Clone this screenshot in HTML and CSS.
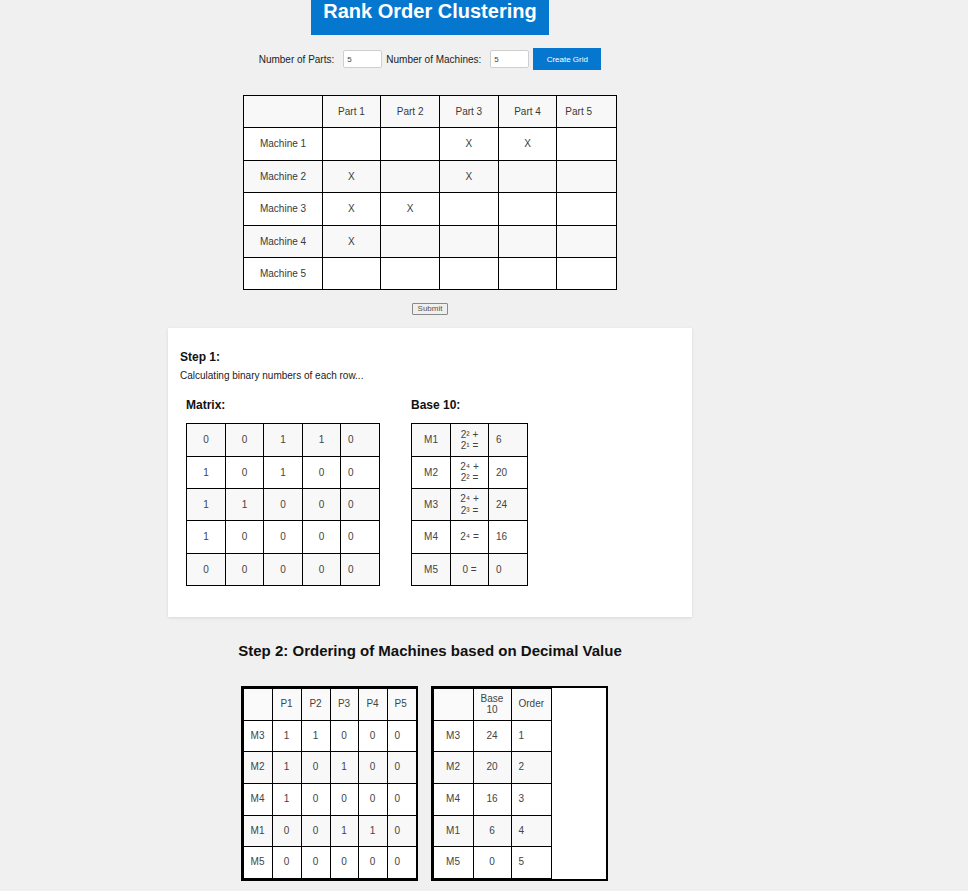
FILE: index.html
```html
<!DOCTYPE html>
<html lang="en">
<head>
<meta charset="utf-8">
<title>Rank Order Clustering</title>
<link rel="stylesheet" href="styles.css">
</head>
<body>
<div class="page">
  <h1 class="title">Rank Order Clustering</h1>

  <div class="controls">
    <label class="lbl">Number of Parts:</label>
    <input class="num" type="text" value="5">
    <label class="lbl">Number of Machines:</label>
    <input class="num" type="text" value="5">
    <button class="create">Create Grid</button>
  </div>

  <table class="grid">
    <thead>
      <tr><th></th><th>Part 1</th><th>Part 2</th><th>Part 3</th><th>Part 4</th><th>Part 5</th></tr>
    </thead>
    <tbody>
      <tr><td>Machine 1</td><td></td><td></td><td>X</td><td>X</td><td></td></tr>
      <tr><td>Machine 2</td><td>X</td><td></td><td>X</td><td></td><td></td></tr>
      <tr><td>Machine 3</td><td>X</td><td>X</td><td></td><td></td><td></td></tr>
      <tr><td>Machine 4</td><td>X</td><td></td><td></td><td></td><td></td></tr>
      <tr><td>Machine 5</td><td></td><td></td><td></td><td></td><td></td></tr>
    </tbody>
  </table>

  <button class="submit">Submit</button>

  <section class="card">
    <h3 class="step-title">Step 1:</h3>
    <p class="step-note">Calculating binary numbers of each row...</p>
    <div class="step-cols">
      <div class="col">
        <h4 class="col-title">Matrix:</h4>
        <table class="mini matrix">
          <colgroup><col class="c39"><col class="c38"><col class="c39"><col class="c38"><col class="c39"></colgroup>
          <tbody>
            <tr><td>0</td><td>0</td><td>1</td><td>1</td><td>0</td></tr>
            <tr><td>1</td><td>0</td><td>1</td><td>0</td><td>0</td></tr>
            <tr><td>1</td><td>1</td><td>0</td><td>0</td><td>0</td></tr>
            <tr><td>1</td><td>0</td><td>0</td><td>0</td><td>0</td></tr>
            <tr><td>0</td><td>0</td><td>0</td><td>0</td><td>0</td></tr>
          </tbody>
        </table>
      </div>
      <div class="col">
        <h4 class="col-title">Base 10:</h4>
        <table class="mini base">
          <colgroup><col class="c39"><col class="c38"><col class="c39"></colgroup>
          <tbody>
            <tr><td>M1</td><td class="f">2² + 2¹ =</td><td>6</td></tr>
            <tr><td>M2</td><td class="f">2⁴ + 2² =</td><td>20</td></tr>
            <tr><td>M3</td><td class="f">2⁴ + 2³ =</td><td>24</td></tr>
            <tr><td>M4</td><td class="f">2⁴ =</td><td>16</td></tr>
            <tr><td>M5</td><td class="f">0 =</td><td>0</td></tr>
          </tbody>
        </table>
      </div>
    </div>
  </section>

  <h2 class="step2-title">Step 2: Ordering of Machines based on Decimal Value</h2>

  <div class="step2">
    <div class="box">
      <table class="mini order">
        <colgroup><col class="c29"><col class="c29"><col class="c29"><col class="c28"><col class="c29"><col class="c29"></colgroup>
        <thead>
          <tr><th></th><th>P1</th><th>P2</th><th>P3</th><th>P4</th><th>P5</th></tr>
        </thead>
        <tbody>
          <tr><td>M3</td><td>1</td><td>1</td><td>0</td><td>0</td><td>0</td></tr>
          <tr><td>M2</td><td>1</td><td>0</td><td>1</td><td>0</td><td>0</td></tr>
          <tr><td>M4</td><td>1</td><td>0</td><td>0</td><td>0</td><td>0</td></tr>
          <tr><td>M1</td><td>0</td><td>0</td><td>1</td><td>1</td><td>0</td></tr>
          <tr><td>M5</td><td>0</td><td>0</td><td>0</td><td>0</td><td>0</td></tr>
        </tbody>
      </table>
    </div>
    <div class="box">
      <table class="mini rank">
        <colgroup><col class="c40"><col class="c38"><col class="c40"></colgroup>
        <thead>
          <tr><th></th><th class="f">Base 10</th><th>Order</th></tr>
        </thead>
        <tbody>
          <tr><td>M3</td><td>24</td><td>1</td></tr>
          <tr><td>M2</td><td>20</td><td>2</td></tr>
          <tr><td>M4</td><td>16</td><td>3</td></tr>
          <tr><td>M1</td><td>6</td><td>4</td></tr>
          <tr><td>M5</td><td>0</td><td>5</td></tr>
        </tbody>
      </table>
    </div>
  </div>
</div>
</body>
</html>
```

FILE: styles.css
```css
body {
  margin: 0;
  background: #f0f0f0;
  font-family: "Liberation Sans", Arial, sans-serif;
  color: #333;
}

.page {
  width: 860px;
  display: flex;
  flex-direction: column;
  align-items: center;
  padding-bottom: 20px;
}

.title {
  margin: 0;
  background: #0677cf;
  color: #fff;
  font-size: 20px;
  line-height: 23px;
  font-weight: bold;
  padding: 0 12px 12px;
}

.controls {
  display: flex;
  align-items: center;
  height: 22px;
  margin-top: 13px;
  font-size: 10px;
  color: #222;
}

.lbl {
  margin-right: 9px;
}

.num {
  width: 39px;
  height: 18px;
  box-sizing: border-box;
  border: 1px solid #cfcfcf;
  border-radius: 2px;
  background: #fff;
  font-family: "Liberation Sans", Arial, sans-serif;
  font-size: 8px;
  color: #444;
  padding: 0 3px;
  margin: 0 4px 0 0;
}

.create {
  width: 68px;
  height: 22px;
  border: none;
  background: #0677cf;
  color: #fff;
  font-family: "Liberation Sans", Arial, sans-serif;
  font-size: 8px;
  padding: 0;
}

.grid {
  margin-top: 25px;
  border-collapse: collapse;
  background: #fff;
  font-size: 10px;
}

.grid th,
.grid td {
  border: 1px solid #000;
  padding: 10px 15.5px;
  line-height: 11.4px;
  font-weight: normal;
  text-align: center;
  color: #3a3a3a;
}

.grid th {
  background: #f8f8f8;
}

.grid th:last-child,
.grid td:last-child {
  text-align: left;
  padding: 10px 23.5px 10px 8px;
}

.grid tbody tr:nth-child(even) td {
  background: #f8f8f8;
}

.submit {
  margin-top: 13px;
  height: 12px;
  padding: 0 5px;
  border: 1px solid #8a8a8a;
  border-radius: 1px;
  background: #efefef;
  color: #555;
  font-family: "Liberation Sans", Arial, sans-serif;
  font-size: 8px;
  line-height: 10px;
}

.card {
  margin-top: 13px;
  width: 524px;
  box-sizing: border-box;
  background: #fff;
  padding: 22px 12px 31px;
  box-shadow: 0 1px 3px rgba(0, 0, 0, 0.1);
}

.step-title {
  margin: 0;
  font-size: 12px;
  line-height: 14px;
  font-weight: bold;
  color: #111;
}

.step-note {
  margin: 6px 0 0;
  font-size: 10px;
  line-height: 12px;
  color: #222;
}

.step-cols {
  display: flex;
  gap: 31px;
  margin-top: 16px;
  padding-left: 6px;
}

.col-title {
  margin: 0 0 11px;
  font-size: 12px;
  line-height: 14px;
  font-weight: bold;
  color: #111;
}

.mini {
  border-collapse: collapse;
  table-layout: fixed;
  background: #fff;
  font-size: 10px;
}

.matrix { width: 193px; }
.base { width: 116px; }
.order { width: 100%; }
.rank { width: 118px; }

.c28 { width: 28px; }
.c29 { width: 29px; }
.c38 { width: 38px; }
.c39 { width: 39px; }
.c40 { width: 40px; }

.mini th,
.mini td {
  border: 1px solid #000;
  padding: 10px 2px;
  text-align: center;
  font-weight: normal;
  color: #444;
  line-height: 11.3px;
}

.order th,
.order td,
.rank th,
.rank td {
  line-height: 10.7px;
}

.mini th:last-child,
.mini td:last-child {
  text-align: left;
  padding-left: 7px;
}

.mini .f {
  padding: 3px 6px;
  line-height: 11.5px;
}

.matrix tr:nth-child(odd) td,
.base tr:nth-child(odd) td {
  background: #f8f8f8;
}

.order th,
.rank th {
  background: #fafafa;
}

.order tbody tr:nth-child(even) td,
.rank tbody tr:nth-child(even) td {
  background: #f8f8f8;
}

.step2-title {
  margin: 25px 0 0;
  font-size: 15px;
  line-height: 17px;
  font-weight: bold;
  color: #111;
}

.step2 {
  display: flex;
  gap: 13px;
  margin-top: 27px;
  padding-right: 12px;
}

.box {
  width: 177px;
  box-sizing: border-box;
  border: 2px solid #000;
  background: #fff;
}
```
